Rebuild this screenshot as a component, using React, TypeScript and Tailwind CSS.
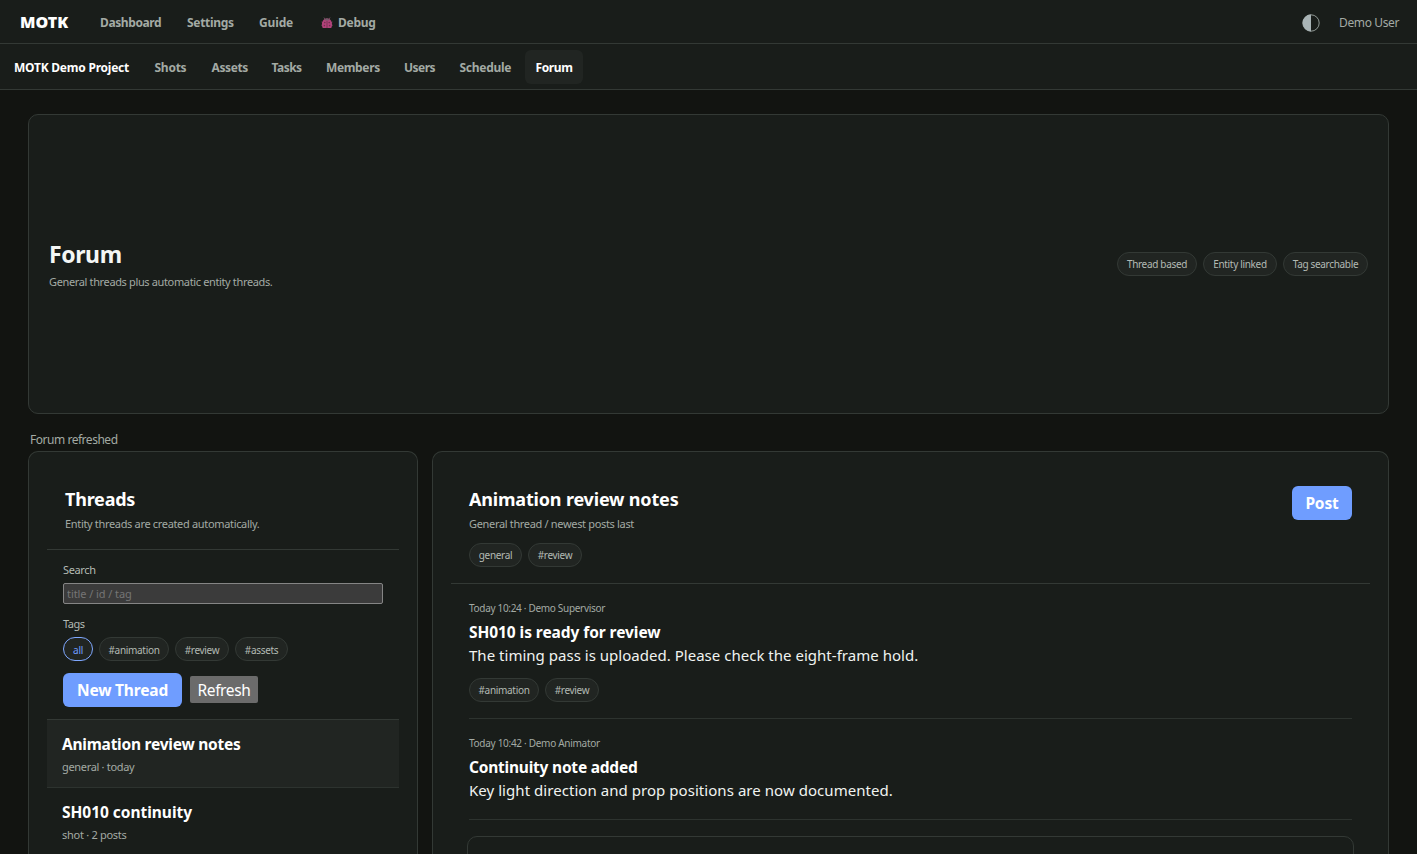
import type { ReactNode } from "react";

function Pill({ children, className }: { children: ReactNode; className: string }) {
  return (
    <span
      className={`flex h-6 items-center justify-center rounded-full border bg-[#212522] pt-px text-[10px] tracking-[-0.32px] whitespace-nowrap ${className}`}
    >
      {children}
    </span>
  );
}

const muted = "border-[#333935] text-[#b3bab4]";

function Beetle() {
  return (
    <svg width="12" height="12" viewBox="0 0 12 12" className="mt-px">
      <path d="M3 .6 4.300 2.400M9 .6 7.700 2.400M.6 5l1.600.8M11.400 5l-1.600.8M.3 8.200h2M11.700 8.200h-2" stroke="#7a5a6b" strokeWidth=".9" />
      <path d="M6 1.600c2.800 0 4.900 2.200 5 5.400.1 1.700-.2 3.200-.8 4H1.800c-.6-.8-.9-2.300-.8-4C1.100 3.800 3.200 1.600 6 1.600Z" fill="#b2427a" />
      <path d="M3.600 2.400C4.400 1.200 7.600 1.200 8.400 2.400L7.600 3.600H4.400Z" fill="#75596a" />
      <path d="M6 4v7" stroke="#71304f" strokeWidth=".8" />
      <g fill="#71304f">
        <circle cx="3.800" cy="5.600" r=".8" />
        <circle cx="8.200" cy="5.600" r=".8" />
        <circle cx="3.400" cy="8.600" r=".8" />
        <circle cx="8.600" cy="8.600" r=".8" />
      </g>
    </svg>
  );
}

function ContrastIcon() {
  return (
    <svg width="18" height="18" viewBox="0 0 18 18">
      <circle cx="9" cy="9" r="8.200" fill="none" stroke="#8f9894" strokeWidth="1" />
      <path d="M9 .6a8.400 8.400 0 0 0 0 16.800Z" fill="#a9b4b6" />
    </svg>
  );
}

function TopBar() {
  return (
    <header className="flex h-11 shrink-0 items-center border-b border-[#333935] bg-[#191d1a] pt-0.5 text-[12px] leading-4 font-bold whitespace-nowrap text-[#a3aaa4]">
      <span className="-mt-0.5 ml-5 w-20 text-[16px] font-black text-white">MOTK</span>
      <span className="w-[87px] tracking-[-0.4px]">Dashboard</span>
      <span className="w-[72px] tracking-[-0.3px]">Settings</span>
      <span className="w-[62px] tracking-[-0.15px]">Guide</span>
      <Beetle />
      <span className="ml-[5px] tracking-[-0.25px]">Debug</span>
      <span className="ml-auto">
        <ContrastIcon />
      </span>
      <span className="ml-[19px] w-[78px] font-normal tracking-[-0.37px]">Demo User</span>
    </header>
  );
}

function ProjectBar() {
  return (
    <nav className="flex h-[46px] shrink-0 items-center border-b border-[#333935] bg-[#191d1a] pt-0.5 pl-3.5 text-[12px] leading-4 font-bold whitespace-nowrap text-[#a3aaa4]">
      <span className="w-[140.5px] tracking-[-0.23px] text-white">MOTK Demo Project</span>
      <span className="w-[57px] tracking-[-0.25px]">Shots</span>
      <span className="w-[60px] tracking-[-0.4px]">Assets</span>
      <span className="w-[54.5px] tracking-[-0.5px]">Tasks</span>
      <span className="w-[78px] tracking-[-0.36px]">Members</span>
      <span className="w-[55.500px] tracking-[-0.5px]">Users</span>
      <span className="w-[65.500px] tracking-[-0.28px]">Schedule</span>
      <span className="-mt-0.5 flex h-[34px] w-[58px] items-center justify-center rounded-md bg-[#212522] pt-0.5 tracking-[-0.35px] text-white">
        Forum
      </span>
    </nav>
  );
}

function Hero() {
  return (
    <section className="flex h-[300px] shrink-0 items-center justify-between rounded-[10px] border border-[#333935] bg-[#191d1a] px-5">
      <div>
        <h1 className="-mt-px text-[23px] leading-8 font-bold tracking-[-0.4px] text-[#f4f6f4]">Forum</h1>
        <p className="mt-1 text-[11px] leading-4 tracking-[-0.36px] text-[#a3aaa4]">
          General threads plus automatic entity threads.
        </p>
      </div>
      <div className="flex gap-1.5">
        <Pill className={`w-20 ${muted}`}>Thread based</Pill>
        <Pill className={`w-[74px] ${muted}`}>Entity linked</Pill>
        <Pill className={`w-[85px] ${muted}`}>Tag searchable</Pill>
      </div>
    </section>
  );
}

function ThreadsPanel() {
  return (
    <aside className="w-[390px] shrink-0 rounded-t-[10px] border border-b-0 border-[#333935] bg-[#191d1a] px-[18px] pt-[18px]">
      <div className="h-20 border-b border-[#333935] px-[18px] pt-[17px]">
        <h2 className="text-[18px] leading-6 font-bold tracking-[-0.22px] text-white">Threads</h2>
        <p className="mt-[5px] text-[11px] leading-4 tracking-[-0.33px] text-[#a3aaa4]">
          Entity threads are created automatically.
        </p>
      </div>
      <div className="h-[170px] border-b border-[#333935] px-4 pt-3 text-[11px] leading-4 text-[#b3bab4]">
        <div className="tracking-[-0.35px]">Search</div>
        <input
          placeholder="title / id / tag"
          className="mt-[5px] block h-[21px] w-full rounded-[2px] border border-[#858585] bg-[#3b3b3b] px-[3px] text-[11px] tracking-[-0.08px] outline-none placeholder:text-[#757575]"
        />
        <div className="mt-3 tracking-[-0.5px]">Tags</div>
        <div className="mt-[5px] flex gap-1.5">
          <Pill className="w-[30px] border-[#7fa8ff] text-[#6f9dff]">all</Pill>
          <Pill className={`w-[70px] ${muted}`}>#animation</Pill>
          <Pill className={`w-[54px] ${muted}`}>#review</Pill>
          <Pill className={`w-[53px] ${muted}`}>#assets</Pill>
        </div>
        <div className="mt-3 flex items-center gap-2 text-white">
          <button className="h-[34px] w-[119px] rounded-md bg-[#6f9dff] text-[15.5px] font-bold tracking-[-0.18px]">New Thread</button>
          <button className="-mt-px h-[27px] w-[68px] rounded-[2px] bg-[#6b6b6b] text-[15.5px] leading-[26px] tracking-[-0.4px]">Refresh</button>
        </div>
      </div>
      <div className="h-[68px] border-b border-[#2d332f] bg-[#212522] px-[15px] pt-3.5">
        <div className="text-[15.5px] leading-5 font-bold tracking-[-0.24px] text-white">Animation review notes</div>
        <div className="mt-[5px] text-[11px] leading-4 tracking-[-0.32px] text-[#a3aaa4]">general · today</div>
      </div>
      <div className="px-[15px] pt-3.5">
        <div className="text-[15.5px] leading-5 font-bold tracking-[-0.03px] text-white">SH010 continuity</div>
        <div className="mt-[5px] text-[11px] leading-4 tracking-[-0.28px] text-[#a3aaa4]">shot · 2 posts</div>
      </div>
    </aside>
  );
}

function ThreadDetail() {
  return (
    <section className="grow rounded-t-[10px] border border-b-0 border-[#333935] bg-[#191d1a] px-[18px] pt-[18px]">
      <div className="flex h-[114px] justify-between border-b border-[#333935] px-[18px] pt-4">
        <div className="pt-px">
          <h2 className="text-[18px] leading-6 font-bold tracking-[-0.18px] text-white">Animation review notes</h2>
          <p className="mt-[5px] text-[11px] leading-4 tracking-[-0.33px] text-[#a3aaa4]">
            General thread / newest posts last
          </p>
          <div className="mt-[11px] flex gap-1.5">
            <Pill className={`w-[53px] ${muted}`}>general</Pill>
            <Pill className={`w-[54px] ${muted}`}>#review</Pill>
          </div>
        </div>
        <button className="h-[34px] w-[60px] rounded-md bg-[#6f9dff] pt-px text-[15.5px] font-bold tracking-[-0.15px] text-white">
          Post
        </button>
      </div>
      <div className="px-[18px]">
        <article className="h-[135px] border-b border-[#2d332f] pt-4">
          <div className="text-[10px] leading-4 tracking-[-0.31px] text-[#a3aaa4]">Today 10:24 · Demo Supervisor</div>
          <div className="mt-1.5 text-[15.5px] leading-5 font-bold tracking-[-0.07px] text-white">SH010 is ready for review</div>
          <p className="mt-[3px] text-[15px] leading-5 tracking-[0.02px] text-[#f0f3f0]">
            The timing pass is uploaded. Please check the eight-frame hold.
          </p>
          <div className="mt-[13px] flex gap-1.5">
            <Pill className={`w-[70px] ${muted}`}>#animation</Pill>
            <Pill className={`w-[54px] ${muted}`}>#review</Pill>
          </div>
        </article>
        <article className="h-[101px] border-b border-[#2d332f] pt-4">
          <div className="text-[10px] leading-4 tracking-[-0.29px] text-[#a3aaa4]">Today 10:42 · Demo Animator</div>
          <div className="mt-1.5 text-[15.5px] leading-5 font-bold tracking-[-0.22px] text-white">Continuity note added</div>
          <p className="mt-[3px] text-[15px] leading-5 tracking-[0.05px] text-[#f0f3f0]">
            Key light direction and prop positions are now documented.
          </p>
        </article>
      </div>
      <div className="mx-4 mt-4 h-24 rounded-[10px] border border-[#333935]" />
    </section>
  );
}

export default function App() {
  return (
    <div className="flex h-screen flex-col overflow-hidden bg-[#121411] font-['Noto_Sans',sans-serif]">
      <TopBar />
      <ProjectBar />
      <main className="flex min-h-0 grow flex-col px-7 pt-6">
        <Hero />
        <p className="mt-[18px] h-[19px] shrink-0 pl-0.5 text-[12px] leading-4 tracking-[-0.47px] text-[#a3aaa4]">Forum refreshed</p>
        <div className="flex min-h-0 grow gap-3.5 overflow-hidden">
          <ThreadsPanel />
          <ThreadDetail />
        </div>
      </main>
    </div>
  );
}
